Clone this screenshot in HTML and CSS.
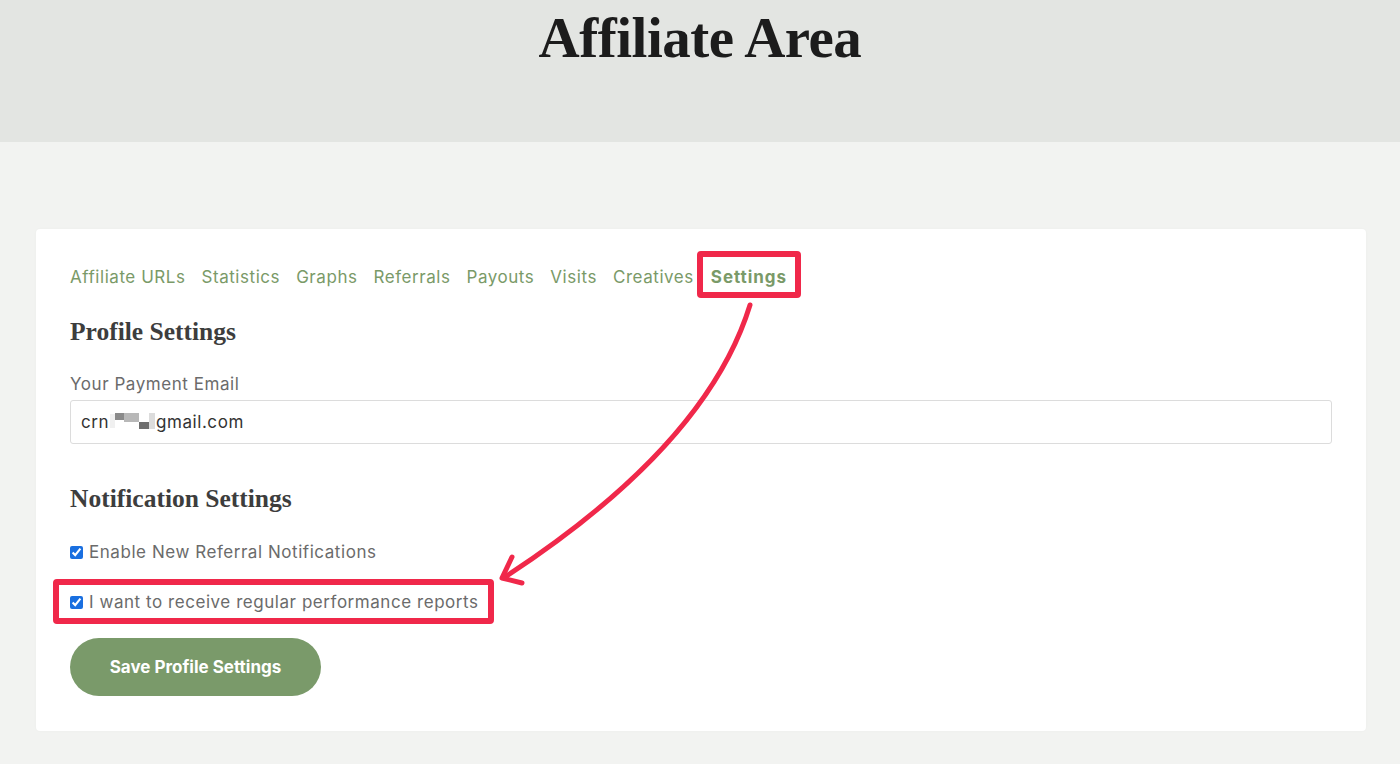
FILE: index.html
```html
<!DOCTYPE html>
<html>
<head>
<meta charset="utf-8">
<link rel="stylesheet" href="styles.css">
</head>
<body>
<header class="hero">
  <h1 class="hero-title">Affiliate Area</h1>
</header>
<main class="page">
  <section class="card">
    <nav class="tabs">
      <a class="tab">Affiliate URLs</a>
      <a class="tab">Statistics</a>
      <a class="tab">Graphs</a>
      <a class="tab">Referrals</a>
      <a class="tab">Payouts</a>
      <a class="tab">Visits</a>
      <a class="tab">Creatives</a>
      <a class="tab tab-active">Settings</a>
    </nav>
    <h2 class="section-title">Profile Settings</h2>
    <label class="field-label">Your Payment Email</label>
    <div class="input">crn<span class="blur"><i class="px p1"></i><i class="px p2"></i><i class="px p3"></i><i class="px p4"></i><i class="px p5"></i></span>gmail.com</div>
    <h2 class="section-title section-title-2">Notification Settings</h2>
    <label class="check-row check-first"><input type="checkbox" checked> Enable New Referral Notifications</label>
    <label class="check-row check-highlight"><input type="checkbox" checked> I want to receive regular performance reports</label>
    <button class="save-btn">Save Profile Settings</button>
  </section>
</main>
<svg class="arrow" width="1400" height="764" viewBox="0 0 1400 764">
  <path d="M750 305 Q707 445 505 577" fill="none" stroke="#f0284a" stroke-width="5" stroke-linecap="round"/>
  <path d="M512 557 L502 578 L522 583" fill="none" stroke="#f0284a" stroke-width="5" stroke-linecap="round" stroke-linejoin="round"/>
</svg>
</body>
</html>
```
FILE: styles.css
```css
* { box-sizing: border-box; }
html, body { margin: 0; padding: 0; }
body {
  width: 1400px;
  height: 764px;
  overflow: hidden;
  background: #f2f3f1;
  font-family: Inter, "Noto Sans", sans-serif;
  position: relative;
}
.hero {
  height: 142px;
  background: #e3e5e2;
  display: flex;
  justify-content: center;
}
.hero-title {
  margin: 0;
  padding-top: 5px;
  font-family: "Liberation Serif", "DejaVu Serif", serif;
  font-weight: 700;
  font-size: 57px;
  line-height: 66px;
  color: #1c1c1c;
  letter-spacing: -0.5px;
}
.page {
  padding: 87px 34px 0 36px;
}
.card {
  background: #fff;
  border-radius: 4px;
  padding: 33px 34px 35px 34px;
  display: flex;
  flex-direction: column;
  align-items: flex-start;
  box-shadow: 0 0 3px rgba(0,0,0,0.03);
}
.tabs {
  display: flex;
  gap: 16px;
}
.tab {
  font-size: 17px;
  line-height: 30px;
  letter-spacing: 0.55px;
  color: #7a9a68;
}
.tab-active {
  font-weight: 700;
  letter-spacing: 0.95px;
  margin-left: 1px;
  position: relative;
}
.tab-active::after {
  content: "";
  position: absolute;
  left: -14px;
  right: -14px;
  top: -11px;
  bottom: -6px;
  border: 6px solid #f0284a;
  border-radius: 4px;
}
.section-title {
  margin: 24px 0 0 0;
  font-family: "Liberation Serif", "DejaVu Serif", serif;
  font-weight: 700;
  font-size: 25.5px;
  line-height: 31px;
  color: #3d3d3d;
}
.section-title-2 { margin-top: 39px; }
.field-label {
  margin-top: 24px;
  font-size: 17px;
  line-height: 26px;
  letter-spacing: 0.55px;
  color: #6b6b6b;
}
.input {
  margin-top: 3px;
  align-self: stretch;
  height: 44px;
  border: 1px solid #dcdcdc;
  border-radius: 3px;
  padding: 0 10px;
  display: flex;
  align-items: center;
  font-size: 17px;
  letter-spacing: 0.55px;
  color: #333;
}
.blur {
  display: inline-flex;
  align-items: center;
  height: 20px;
  margin: 0 1px 0 1px;
  position: relative;
  top: -1px;
}
.px { display: block; }
.p1 { width: 5px; background: #f0f0f0; height: 14px; }
.p2 { width: 9px; background: #8a8a8a; height: 7px; align-self: flex-start; margin-top: 2px; }
.p3 { width: 15px; background: #b8b8b8; height: 9px; align-self: flex-start; margin-top: 2px; }
.p4 { width: 10px; background: #6e6e6e; height: 7px; align-self: flex-end; margin-bottom: 2px; }
.p5 { width: 6px; background: #dcdcdc; height: 16px; }
.check-row {
  margin-top: 24px;
  font-size: 17px;
  line-height: 26px;
  letter-spacing: 0.55px;
  color: #6b6b6b;
  display: flex;
  align-items: center;
  gap: 6px;
}
.check-first { margin-top: 25px; }
.check-row input {
  margin: 0;
  width: 13px;
  height: 13px;
  accent-color: #1a6fe0;
}
.check-highlight { position: relative; }
.check-highlight::after {
  content: "";
  position: absolute;
  left: -17px;
  right: -15px;
  top: -10px;
  bottom: -9px;
  border: 6px solid #f0284a;
  border-radius: 4px;
}
.save-btn {
  margin-top: 23px;
  width: 251px;
  height: 58px;
  border: none;
  border-radius: 29px;
  background: #7a9a6a;
  color: #fff;
  font-family: Inter, "Noto Sans", sans-serif;
  font-weight: 700;
  font-size: 17px;
  letter-spacing: 0;
}
.arrow {
  position: absolute;
  left: 0;
  top: 0;
  pointer-events: none;
}
```
